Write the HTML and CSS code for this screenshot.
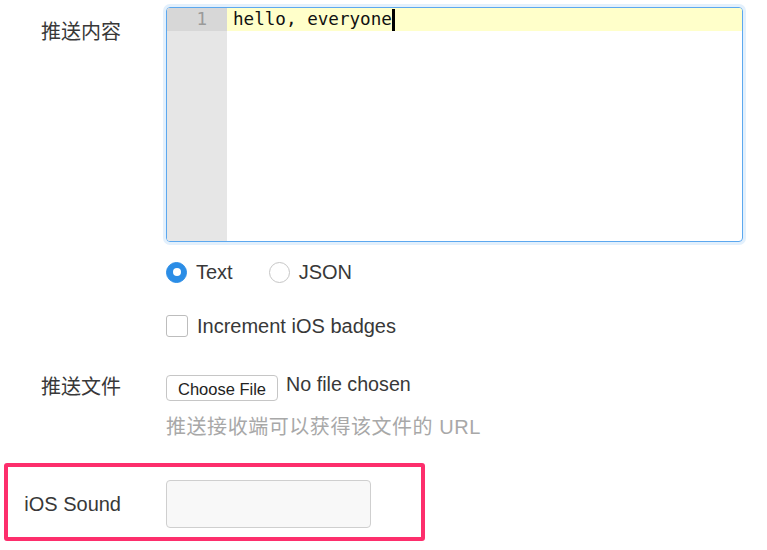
FILE: index.html
```html
<!DOCTYPE html>
<html lang="zh-CN">
<head>
<meta charset="utf-8">
<title>推送</title>
<link rel="stylesheet" href="styles.css">
</head>
<body>
<form class="form">
  <div class="row row-content">
    <div class="label">推送内容</div>
    <div class="control">
      <div class="editor">
        <div class="gutter"><div class="ln is-active">1</div></div>
        <div class="code"><div class="line is-active">hello, everyone<span class="cursor"></span></div></div>
      </div>
      <div class="radios">
        <span class="radio-opt"><span class="radio is-checked"></span>Text</span>
        <span class="radio-opt"><span class="radio"></span>JSON</span>
      </div>
      <div class="check-opt"><span class="checkbox"></span>Increment iOS badges</div>
    </div>
  </div>
  <div class="row row-file">
    <div class="label">推送文件</div>
    <div class="control">
      <div class="file"><span class="file-btn">Choose File</span><span class="file-name">No file chosen</span></div>
      <div class="hint">推送接收端可以获得该文件的 URL</div>
    </div>
  </div>
  <div class="row row-sound">
    <div class="label">iOS Sound</div>
    <div class="control"><span class="text-input"></span></div>
  </div>
</form>
</body>
</html>
```
FILE: styles.css
```css
*, *::before, *::after { box-sizing: border-box; }
html, body { margin: 0; padding: 0; background: #fff; }
body {
  font-family: "Liberation Sans", "Noto Sans CJK SC", sans-serif;
  font-size: 20px;
  color: #383838;
  line-height: 28px;
}
.form { padding-top: 7px; width: 743px; }
.row {
  display: grid;
  grid-template-columns: 121px 577px;
  column-gap: 45px;
}
.label { text-align: right; color: #383838; }
.row-content .label { padding-top: 11px; }

.editor {
  height: 235px;
  border: 1px solid #5ca8ef;
  border-radius: 4px;
  box-shadow: 0 0 0 3px #e3f0fc;
  display: flex;
  overflow: hidden;
  font-family: "DejaVu Sans Mono", monospace;
  font-size: 17.6px;
  line-height: 23px;
}
.gutter { width: 60px; background: #e6e6e6; flex: none; }
.ln { text-align: right; padding-right: 20px; color: #9a9a9a; height: 23px; }
.ln.is-active { background: #d7d7d7; }
.code { flex: 1; }
.line { padding-left: 6px; color: #111; height: 23px; }
.line.is-active { background: #ffffca; }
.cursor {
  display: inline-block;
  width: 3px;
  height: 22px;
  background: #000;
  vertical-align: top;
  margin-top: 1px;
}

.radios { margin-top: 16px; display: flex; gap: 36px; }
.radio-opt, .check-opt { display: flex; align-items: center; gap: 9px; }
.radio {
  width: 21px; height: 21px; border-radius: 50%;
  border: 1px solid #c6c6c6; background: #fff;
  display: inline-flex; align-items: center; justify-content: center;
}
.radio.is-checked { background: #2b8de6; border-color: #2b8de6; }
.radio.is-checked::after {
  content: ""; width: 8px; height: 8px; border-radius: 50%; background: #fff;
}
.check-opt { margin-top: 26px; }
.checkbox {
  width: 22px; height: 22px; border: 1px solid #bdbdbd; border-radius: 3px; background: #fff;
}

.row-file { margin-top: 33px; }
.file { display: flex; align-items: center; gap: 8px; height: 28px; }
.file-btn {
  height: 26px;
  padding: 0 11px;
  border: 1px solid #c6c6c6;
  border-radius: 4px;
  background: #fff;
  font-size: 16.5px;
  line-height: 26px;
  color: #222;
  margin-top: 2px;
}
.file-name { font-size: 19.7px; margin-top: -6px; }
.hint { margin-top: 12px; color: #a8a8a8; letter-spacing: 0.55px; }

.row-sound {
  position: relative;
  margin-top: 22px;
  padding: 17px 0 13px;
  align-items: center;
}
.row-sound::after {
  content: "";
  position: absolute;
  left: 4px; top: 0; bottom: 0;
  width: 421px;
  border: 4px solid #fd2e6c;
  border-radius: 3px;
}
.text-input {
  display: block;
  width: 205px; height: 48px;
  border: 1px solid #cfcfcf;
  border-radius: 4px;
  background: #f8f8f8;
}
```
